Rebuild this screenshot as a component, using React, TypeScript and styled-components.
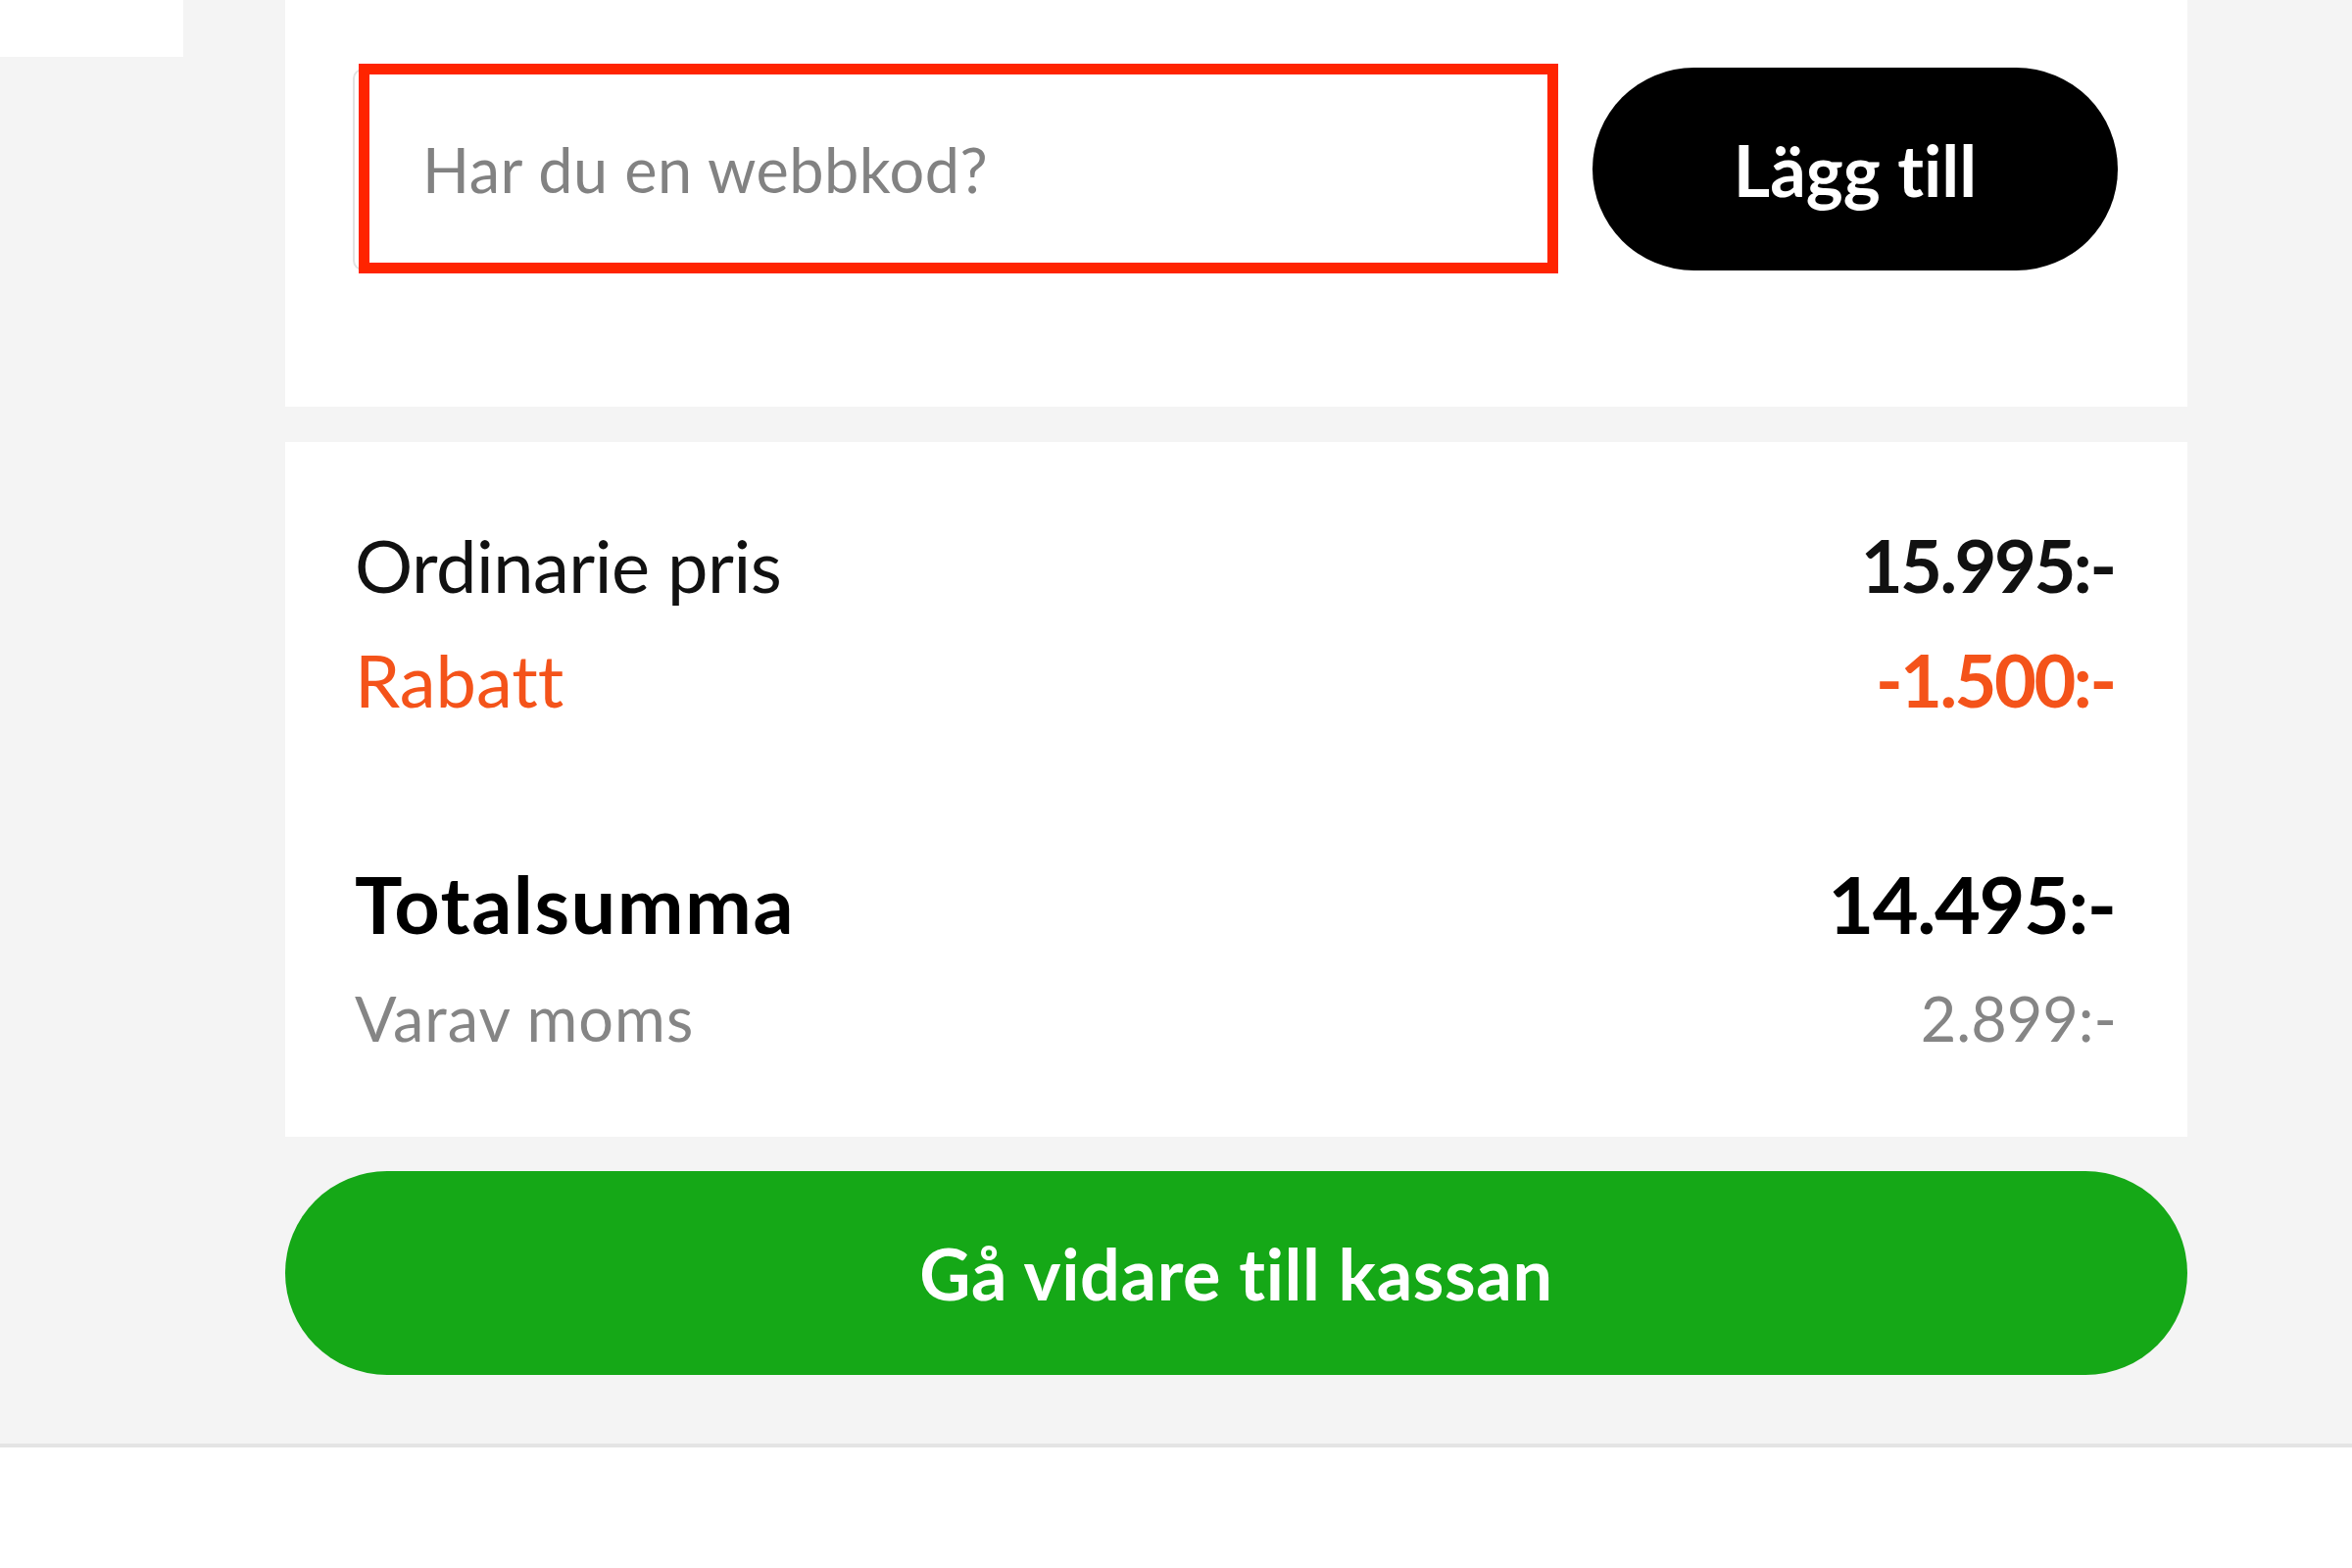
import * as React from "react";
import styled, { createGlobalStyle } from "styled-components";

const GlobalStyle = createGlobalStyle`
  html, body {
    margin: 0;
    padding: 0;
    background: #ffffff;
  }
  body {
    font-family: Lato, "Open Sans", "Liberation Sans", sans-serif;
    font-variant-ligatures: none;
    color: #111;
  }
`;

const Page = styled.div`
  display: flex;
  background: #f4f4f4;
  border-bottom: 4px solid #e4e4e4;
`;

const Sidebar = styled.aside`
  width: 291px;
  flex-shrink: 0;
`;

const SideTab = styled.div`
  width: 187px;
  height: 58px;
  background: #ffffff;
`;

const Main = styled.main`
  width: 1941px;
  display: flex;
  flex-direction: column;
  padding-bottom: 70px;
`;

const Card = styled.section<{ $gapAfter: number }>`
  background: #ffffff;
  margin-bottom: ${(p) => p.$gapAfter}px;
`;

const CodeCard = styled(Card)`
  padding: 68px 71px 138px 69px;
`;

const CodeRow = styled.form`
  display: flex;
  align-items: center;
  gap: 35px;
  height: 209px;
`;

const InputWrap = styled.div`
  position: relative;
  flex: 1;
  height: 206px;
`;

const CodeInput = styled.input`
  box-sizing: border-box;
  width: 100%;
  height: 100%;
  border: 2px solid #e2e2e2;
  border-radius: 10px;
  padding: 0 0 0 69px;
  font-family: inherit;
  font-size: 63px;
  letter-spacing: 0.5px;
  font-variant-ligatures: none;
  color: #222;
  background: #fff;
  outline: none;

  &::placeholder {
    color: #828282;
  }
`;

// red highlight frame laid over the input
const Highlight = styled.div`
  position: absolute;
  top: -5px;
  left: 6px;
  right: 0;
  bottom: -3px;
  border: 11px solid #ff2400;
  pointer-events: none;
`;

const PillButton = styled.button<{ $tone: "dark" | "green" }>`
  border: none;
  border-radius: 110px;
  font-family: inherit;
  font-weight: 700;
  font-variant-ligatures: none;
  color: #ffffff;
  cursor: pointer;
  background: ${(p) => (p.$tone === "dark" ? "#000000" : "#15a817")};
`;

const AddButton = styled(PillButton)`
  width: 536px;
  height: 207px;
  font-size: 72px;
`;

const SummaryCard = styled(Card)`
  padding: 67px 72px 76px 71px;
`;

const Line = styled.div<{ $size: number; $height: number; $top?: number }>`
  display: flex;
  justify-content: space-between;
  align-items: baseline;
  font-size: ${(p) => p.$size}px;
  line-height: ${(p) => p.$height}px;
  margin-top: ${(p) => p.$top ?? 0}px;
`;

const Label = styled.span<{ $color: string; $bold?: boolean; $track?: number }>`
  color: ${(p) => p.$color};
  font-weight: ${(p) => (p.$bold ? 700 : 400)};
  letter-spacing: ${(p) => p.$track ?? 0}px;
`;

const Amount = styled.span<{ $color: string; $bold?: boolean; $track?: number }>`
  color: ${(p) => p.$color};
  font-weight: ${(p) => (p.$bold ? 700 : 400)};
  letter-spacing: ${(p) => p.$track ?? 0}px;
  margin-right: ${(p) => -(p.$track ?? 0)}px;
`;

const CheckoutButton = styled(PillButton)`
  width: 100%;
  height: 208px;
  font-size: 72px;
  letter-spacing: 0.6px;
`;

const ORANGE = "#f4531a";
const GREY = "#858585";

export default function App() {
  const [code, setCode] = React.useState("");

  return (
    <>
      <GlobalStyle />
      <Page>
        <Sidebar>
          <SideTab />
        </Sidebar>
        <Main>
          <CodeCard $gapAfter={36}>
            <CodeRow onSubmit={(e) => e.preventDefault()}>
              <InputWrap>
                <CodeInput
                  value={code}
                  onChange={(e) => setCode(e.target.value)}
                  placeholder="Har du en webbkod?"
                />
                <Highlight />
              </InputWrap>
              <AddButton type="submit" $tone="dark">Lägg till</AddButton>
            </CodeRow>
          </CodeCard>

          <SummaryCard $gapAfter={35}>
            <Line $size={74} $height={117}>
              <Label $color="#111" $track={-0.5}>Ordinarie pris</Label>
              <Amount $color="#111" $bold $track={-2.5}>15.995:-</Amount>
            </Line>
            <Line $size={74} $height={117}>
              <Label $color={ORANGE}>Rabatt</Label>
              <Amount $color={ORANGE} $bold $track={-2.5}>-1.500:-</Amount>
            </Line>
            <Line $size={81} $height={100} $top={120}>
              <Label $color="#000" $bold $track={1.5}>Totalsumma</Label>
              <Amount $color="#000" $bold $track={-1.5}>14.495:-</Amount>
            </Line>
            <Line $size={63} $height={91} $top={21}>
              <Label $color={GREY} $track={1}>Varav moms</Label>
              <Amount $color={GREY}>2.899:-</Amount>
            </Line>
          </SummaryCard>

          <CheckoutButton $tone="green">Gå vidare till kassan</CheckoutButton>
        </Main>
      </Page>
    </>
  );
}
